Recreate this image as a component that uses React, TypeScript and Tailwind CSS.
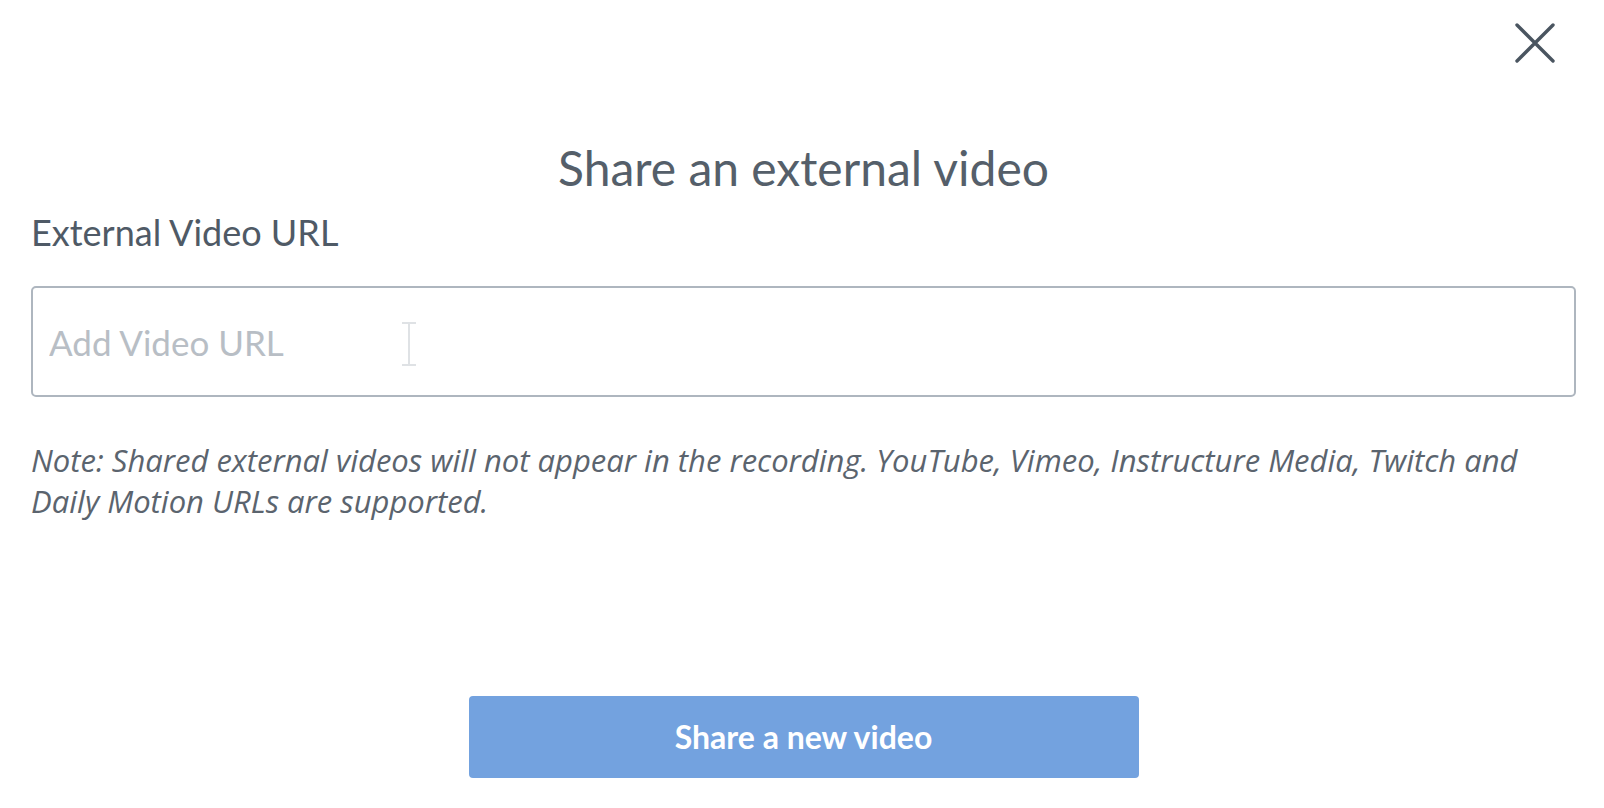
import { useState } from "react";

function CloseIcon() {
  return (
    <svg width="40" height="40" viewBox="0 0 40 40" fill="none">
      <path
        d="M2 2L38 38M38 2L2 38"
        stroke="#4a5560"
        strokeWidth="3.4"
        strokeLinecap="round"
      />
    </svg>
  );
}

function TextCursor() {
  return (
    <svg
      className="absolute left-[367px] top-[35px]"
      width="22"
      height="46"
      viewBox="0 0 22 46"
      fill="none"
    >
      <path
        d="M4 2H18M11 2V44M4 44H18"
        stroke="#dfe2e5"
        strokeWidth="2"
      />
    </svg>
  );
}

export default function App() {
  const [url, setUrl] = useState("");

  return (
    <div className="flex flex-col w-[1604px] h-[808px] bg-white pl-[31px] pr-[28px] font-['Lato',sans-serif]">
      <div className="flex justify-end pt-[23px] pr-[21px]">
        <button className="w-[40px] h-[40px]">
          <CloseIcon />
        </button>
      </div>

      <h1 className="mt-[81px] text-center text-[48px] leading-none font-normal text-[#555f6a]">
        Share an external video
      </h1>

      <label className="mt-[22px] text-[36px] leading-none text-[#4f5a66]">
        External Video URL
      </label>

      <div className="relative mt-[36px]">
        <input
          type="text"
          value={url}
          onChange={(e) => setUrl(e.target.value)}
          placeholder="Add Video URL"
          className="w-full h-[111px] rounded-[5px] border-2 border-[#aeb6bf] pl-[16px] text-[35px] text-[#4f5a66] placeholder:text-[#b8bec5] focus:outline-none"
        />
        <TextCursor />
      </div>

      <p className="mt-[43px] font-['Open_Sans',sans-serif] italic text-[31px] leading-[41px] text-[#5b646e]">
        Note: Shared external videos will not appear in the recording. YouTube,
        Vimeo, Instructure Media, Twitch and Daily Motion URLs are supported.
      </p>

      <div className="flex justify-center mt-auto mb-[30px]">
        <button className="w-[670px] h-[82px] rounded-[4px] bg-[#73a2df] text-white text-[32px] font-bold">
          Share a new video
        </button>
      </div>
    </div>
  );
}
